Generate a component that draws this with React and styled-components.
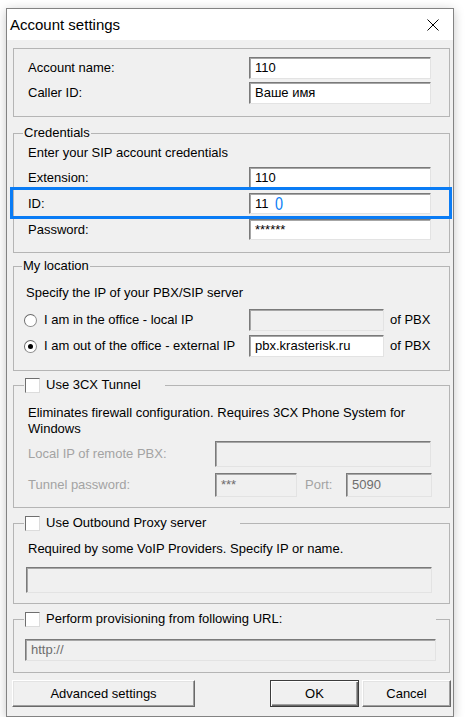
import React from 'react';
import styled, { createGlobalStyle, css } from 'styled-components';

const GlobalStyle = createGlobalStyle`
  html, body {
    margin: 0;
    padding: 0;
    background: #fff;
  }
  body {
    font-family: "Liberation Sans", Arial, sans-serif;
    font-size: 13px;
    line-height: 16px;
    color: #000;
  }
`

const Window = styled.div`
  margin: 8px 0 0 6px;
  width: 448px;
  height: 709px;
  box-sizing: border-box;
  border: 1px solid #838383;
  background: #f0f0f0;
  box-shadow: 0 2px 10px rgba(0, 0, 0, 0.22);
  display: flex;
  flex-direction: column;
`

const TitleBar = styled.div`
  height: 31px;
  flex: 0 0 31px;
  background: #fff;
  display: flex;
  align-items: center;
  justify-content: space-between;
  padding: 0 14px 0 3px;
  font-size: 15px;
`

const Body = styled.div`
  display: flex;
  flex-direction: column;
  padding: 0 3px 0 6px;
`

const Group = styled.fieldset`
  margin: ${({ $mt }) => $mt}px 0 0;
  padding: ${({ $pt }) => $pt}px ${({ $pr = 18 }) => $pr}px ${({ $pb }) => $pb}px ${({ $pl = 14 }) => $pl}px;
  border: 1px solid #b5b5b5;
  min-width: 0;
  display: flex;
  flex-direction: column;
`

const Legend = styled.legend`
  margin-left: ${({ $ml }) => $ml}px;
  padding: 0 1px;
  height: 16px;
  line-height: 16px;

  ${({ $width }) =>
    $width && css`
      width: ${$width}px;
      padding: 0;
      display: flex;
      align-items: center;
      gap: 6px;
    `
  }
`

const Check = styled.span`
  width: 15px;
  height: 15px;
  box-sizing: border-box;
  margin-left: 1px;
  background: #fff;
  border: 1px solid;
  border-color: #6f6f6f #dcdcdc #dcdcdc #6f6f6f;
  flex: 0 0 auto;
`

const Stack = styled.div`
  display: flex;
  flex-direction: column;
  gap: ${({ $gap }) => $gap}px;
  margin-top: ${({ $mt = 0 }) => $mt}px;
`

const Row = styled.div`
  position: relative;
  display: flex;
  align-items: center;
`

const Label = styled.span`
  flex: 0 0 ${({ $w }) => $w}px;
  color: ${({ $disabled }) => ($disabled ? '#a3a3a3' : '#000')};
  margin-left: ${({ $ml = 0 }) => $ml}px;
  white-space: nowrap;
`

const Note = styled.div`
  margin-left: ${({ $ml = 0 }) => $ml}px;
`

const Field = styled.div`
  box-sizing: border-box;
  width: ${({ $w }) => ($w ? `${$w}px` : 'auto')};
  flex: ${({ $w }) => ($w ? '0 0 auto' : '1 1 auto')};
  height: ${({ $h = 22 }) => $h}px;
  display: flex;
  align-items: center;
  padding-left: 5px;
  background: ${({ $disabled }) => ($disabled ? '#f0f0f0' : '#fff')};
  color: ${({ $disabled }) => ($disabled ? '#6d6d6d' : '#000')};
  border: 1px solid;
  border-color: #7a7a7a #e3e3e3 #e3e3e3 #7a7a7a;
  box-shadow: inset 1px 1px 0 #a6a6a6;
  white-space: nowrap;
`

const Cursor = styled.span`
  color: #0a7cf5;
  font-size: 18px;
  margin-left: 5px;
  transform: scaleX(0.8);
`

const Highlight = styled.div`
  position: absolute;
  top: -6px;
  bottom: -5px;
  left: -18px;
  right: -21px;
  border: 3px solid #0a7cf5;
  pointer-events: none;
`

const Radio = styled.span`
  width: 13px;
  height: 13px;
  box-sizing: border-box;
  border-radius: 50%;
  border: 1px solid #8d8d8d;
  border-top-color: #6a6a6a;
  border-left-color: #6a6a6a;
  background: #fff;
  margin-right: 7px;
  display: flex;
  align-items: center;
  justify-content: center;
  flex: 0 0 auto;

  &::after {
    content: '';
    width: 5px;
    height: 5px;
    border-radius: 50%;
    background: ${({ $checked }) => ($checked ? '#000' : 'transparent')};
  }
`

const Suffix = styled.span`
  margin-left: 6px;
`

const Buttons = styled.div`
  display: flex;
  margin: 7px -1px 0 -1px;
  gap: 3px;
`

const Button = styled.button`
  box-sizing: border-box;
  width: ${({ $w }) => $w}px;
  height: 27px;
  margin-left: ${({ $push }) => ($push ? 'auto' : '0')};
  font: inherit;
  color: #000;
  background: #f0f0f0;
  border: 1px solid;
  border-color: #fff #696969 #696969 #fff;
  box-shadow: inset -1px -1px 0 #a0a0a0, inset 1px 1px 0 #e3e3e3;
  padding: 0;

  ${({ $default }) =>
    $default && css`
      border-color: #3c3c3c;
      box-shadow: inset 1px 1px 0 #fff, inset -1px -1px 0 #696969, inset -2px -2px 0 #a0a0a0;
    `
  }
`

const CloseIcon = () => (
  <svg width="12" height="12" viewBox="0 0 12 12">
    <path d="M0.5 0.5 L11.5 11.5 M11.5 0.5 L0.5 11.5" stroke="#000" strokeWidth="1" fill="none" />
  </svg>
)

const App = () => (
  <>
    <GlobalStyle />
    <Window>
      <TitleBar>
        <span>Account settings</span>
        <CloseIcon />
      </TitleBar>
      <Body>
        <Group $mt={8} $pt={8} $pb={12}>
          <Stack $gap={3}>
            <Row>
              <Label $w={221}>Account name:</Label>
              <Field $w={182}>110</Field>
            </Row>
            <Row>
              <Label $w={221}>Caller ID:</Label>
              <Field $w={182}>Ваше имя</Field>
            </Row>
          </Stack>
        </Group>

        <Group $mt={8} $pt={4} $pb={12}>
          <Legend $ml={-5}>Credentials</Legend>
          <Note>Enter your SIP account credentials</Note>
          <Stack $gap={5} $mt={6}>
            <Row>
              <Label $w={221}>Extension:</Label>
              <Field $w={182} $h={21}>110</Field>
            </Row>
            <Row>
              <Label $w={221}>ID:</Label>
              <Field $w={182} $h={21}>
                11<Cursor>0</Cursor>
              </Field>
              <Highlight />
            </Row>
            <Row>
              <Label $w={221}>Password:</Label>
              <Field $w={182} $h={21}>******</Field>
            </Row>
          </Stack>
        </Group>

        <Group $mt={5} $pt={11} $pb={13} $pl={10}>
          <Legend $ml={-2}>My location</Legend>
          <Note $ml={2}>Specify the IP of your PBX/SIP server</Note>
          <Stack $gap={4} $mt={8}>
            <Row>
              <Radio />
              <Label $w={205}>I am in the office - local IP</Label>
              <Field $w={135} $disabled />
              <Suffix>of PBX</Suffix>
            </Row>
            <Row>
              <Radio $checked />
              <Label $w={205}>I am out of the office - external IP</Label>
              <Field $w={135}>pbx.krasterisk.ru</Field>
              <Suffix>of PBX</Suffix>
            </Row>
          </Stack>
        </Group>

        <Group $mt={6} $pt={12} $pb={10}>
          <Legend $ml={-4} $width={141}>
            <Check />
            Use 3CX Tunnel
          </Legend>
          <Note>Eliminates firewall configuration. Requires 3CX Phone System for Windows</Note>
          <Stack $gap={6} $mt={4}>
            <Row>
              <Label $w={187} $disabled>Local IP of remote PBX:</Label>
              <Field $w={216} $h={26} $disabled />
            </Row>
            <Row>
              <Label $w={187} $disabled>Tunnel password:</Label>
              <Field $w={82} $h={24} $disabled>***</Field>
              <Label $w={41} $ml={8} $disabled>Port:</Label>
              <Field $w={86} $h={24} $disabled>5090</Field>
            </Row>
          </Stack>
        </Group>

        <Group $mt={7} $pt={10} $pb={10} $pl={12} $pr={17}>
          <Legend $ml={-2} $width={216}>
            <Check />
            Use Outbound Proxy server
          </Legend>
          <Note $ml={2}>Required by some VoIP Providers. Specify IP or name.</Note>
          <Stack $gap={0} $mt={10}>
            <Field $h={26} $disabled />
          </Stack>
        </Group>

        <Group $mt={7} $pt={12} $pb={11} $pl={11} $pr={13}>
          <Legend $ml={-1} $width={412}>
            <Check />
            Perform provisioning from following URL:
          </Legend>
          <Field $h={22} $disabled>http://</Field>
        </Group>

        <Buttons>
          <Button $w={183}>Advanced settings</Button>
          <Button $w={89} $push $default>OK</Button>
          <Button $w={89}>Cancel</Button>
        </Buttons>
      </Body>
    </Window>
  </>
)

export default App
